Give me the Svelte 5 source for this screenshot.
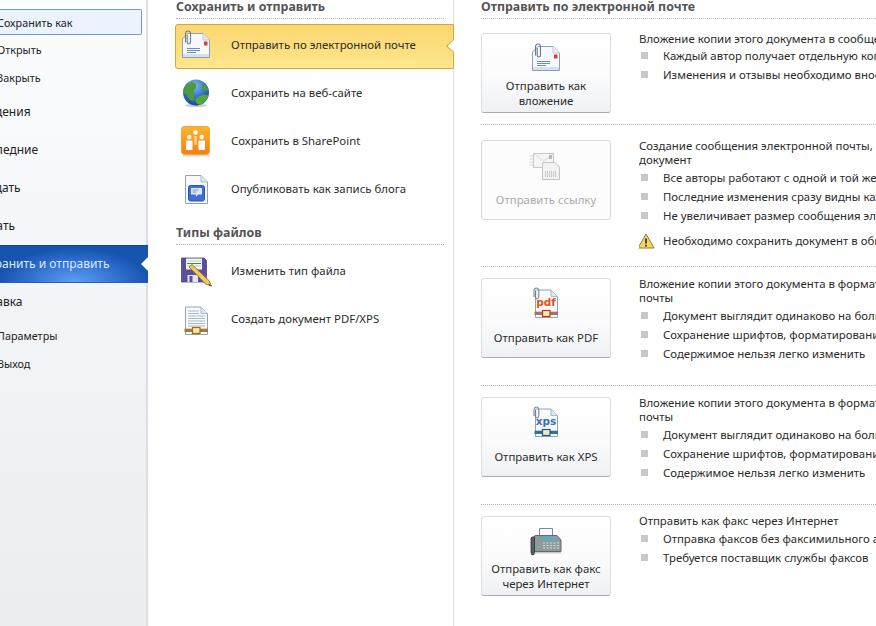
<script>
  const navItems = [
    { label: 'Сохранить как', small: true, hover: true },
    { label: 'Открыть', small: true },
    { label: 'Закрыть', small: true },
    { label: 'Сведения' },
    { label: 'Последние' },
    { label: 'Создать' },
    { label: 'Печать' },
    { label: 'Сохранить и отправить', active: true },
    { label: 'Справка' },
    { label: 'Параметры', small: true },
    { label: 'Выход', small: true },
  ];

  const sections = [
    {
      icon: 'mail', label: ['Отправить как', 'вложение'], cls: 'first',
      intro: ['Вложение копии этого документа в сообщение электронной почты'],
      points: ['Каждый автор получает отдельную копию документа', 'Изменения и отзывы необходимо вносить вручную'],
    },
    {
      icon: 'link', label: ['Отправить ссылку'], cls: 'second', disabled: true,
      intro: ['Создание сообщения электронной почты, содержащего ссылку на этот', 'документ'],
      points: ['Все авторы работают с одной и той же копией документа', 'Последние изменения сразу видны каждому автору', 'Не увеличивает размер сообщения электронной почты'],
      warning: 'Необходимо сохранить документ в общем расположении',
    },
    {
      icon: 'pdf', label: ['Отправить как PDF'], cls: 'third',
      intro: ['Вложение копии этого документа в формате PDF в сообщение электронной', 'почты'],
      points: ['Документ выглядит одинаково на большинстве компьютеров', 'Сохранение шрифтов, форматирования и изображений', 'Содержимое нельзя легко изменить'],
    },
    {
      icon: 'xps', label: ['Отправить как XPS'], cls: 'third',
      intro: ['Вложение копии этого документа в формате XPS в сообщение электронной', 'почты'],
      points: ['Документ выглядит одинаково на большинстве компьютеров', 'Сохранение шрифтов, форматирования и изображений', 'Содержимое нельзя легко изменить'],
    },
    {
      icon: 'fax', label: ['Отправить как факс', 'через Интернет'], cls: 'last',
      intro: ['Отправить как факс через Интернет'],
      points: ['Отправка факсов без факсимильного аппарата', 'Требуется поставщик службы факсов'],
    },
  ];
</script>

{#snippet mailIcon()}
  <svg width="30" height="30" viewBox="0 0 30 30">
    <path d="M1.5 9 L7 3.5 H22 L28.5 10 V27.5 H1.5 Z" fill="#f6f9fc" stroke="#8ba0b8" />
    <path d="M2 27 H28 V24 H2 Z" fill="#d5e0ec" />
    <path d="M22 3.5 V10 H28.5" fill="#e6ecf3" stroke="#c0ccd9" />
    <rect x="23" y="11.5" width="3.5" height="4" fill="#d8412f" />
    <path d="M6 18.5 H19 M6 20.5 H19 M6 22.5 H15" stroke="#6f8fb8" stroke-width="1" />
    <path d="M4.5 12.5 V4.5 Q4.5 1 7 1 Q9.5 1 9.5 4.5 V12 Q9.5 14 7.8 14 Q6.2 14 6.2 12 V5" fill="none" stroke="#6d7a88" stroke-width="1.1" />
  </svg>
{/snippet}

{#snippet globeIcon()}
  <svg width="30" height="30" viewBox="0 0 30 30">
    <defs>
      <radialGradient id="sea" cx="0.45" cy="0.25" r="0.85">
        <stop offset="0" stop-color="#86b9ec" />
        <stop offset="0.55" stop-color="#2d6fc2" />
        <stop offset="1" stop-color="#163a75" />
      </radialGradient>
    </defs>
    <ellipse cx="15" cy="27.5" rx="11" ry="1.6" fill="#c9ccd0" />
    <circle cx="15" cy="14.5" r="13" fill="url(#sea)" />
    <path d="M3 10 Q8 3 14 5 Q17 9 13 12 Q11 17 14 22 Q10 24 7 19 Q5 15 2.2 15 Z" fill="#4f9a3a" />
    <path d="M14 22 Q20 15 27.6 17.5 Q25 24 19 27 Q15 26 14 22 Z" fill="#58a53e" />
    <path d="M21 6 Q25 7 27.5 12 Q24 14 21 11 Z" fill="#4f9a3a" />
  </svg>
{/snippet}

{#snippet sharepointIcon()}
  <svg width="32" height="32" viewBox="0 0 32 32">
    <defs>
      <linearGradient id="spBox" x1="0" y1="0" x2="0" y2="1">
        <stop offset="0" stop-color="#fdb52f" />
        <stop offset="1" stop-color="#f57f0e" />
      </linearGradient>
    </defs>
    <rect x="3" y="30" width="27" height="1.5" fill="#d8dade" />
    <rect x="1.5" y="1.5" width="28" height="28" rx="3" fill="url(#spBox)" stroke="#f3a33a" />
    <g fill="#fff">
      <circle cx="15.5" cy="7.5" r="2.2" />
      <circle cx="9.3" cy="12" r="2.2" />
      <circle cx="21.7" cy="12" r="2.2" />
      <rect x="14.4" y="11" width="2.2" height="9" fill="#ffd79a" />
      <rect x="6" y="15.5" width="6.5" height="9.5" rx="0.8" />
      <rect x="18.5" y="15.5" width="6.5" height="9.5" rx="0.8" />
    </g>
  </svg>
{/snippet}

{#snippet blogIcon()}
  <svg width="30" height="30" viewBox="0 0 30 30">
    <path d="M4.5 1.5 H20 L26.5 8 V29.5 H4.5 Z" fill="#f7f9fc" stroke="#8ea4bd" />
    <path d="M20 1.5 V8 H26.5" fill="#dfe7f0" stroke="#a9bacd" />
    <rect x="7.5" y="11.5" width="16" height="15.5" rx="2" fill="#3f6fd6" stroke="#2f55ad" />
    <path d="M10 14 H21 V20.5 H17 L15 23 V20.5 H10 Z" fill="#dfe9fb" />
    <path d="M11.5 16 H17.5 M11.5 18 H15.5" stroke="#7897d8" stroke-width="1" />
  </svg>
{/snippet}

{#snippet floppyIcon()}
  <svg width="32" height="32" viewBox="0 0 32 32">
    <path d="M1.5 3 H24 L26.5 5.5 V27 H1.5 Z" fill="#5c4f9a" stroke="#4c4487" stroke-width="0.8" />
    <rect x="6" y="3.5" width="16" height="11" fill="#f4f6f2" />
    <path d="M7 8.5 H21" stroke="#2ca02c" stroke-width="1" />
    <path d="M7 6 H21 M7 11 H21" stroke="#c6ccd4" stroke-width="1" />
    <rect x="7.5" y="20" width="10.5" height="7" fill="#e4e5ee" />
    <rect x="9.5" y="21" width="3" height="6" fill="#5c4f9a" />
    <path d="M9 12 L12 9.5 L29 25.5 L31.5 31 L25.5 29 Z" fill="#f2c65e" stroke="#7a6030" stroke-width="0.8" />
    <path d="M28.5 28.5 L31.5 31 L29.2 30.4 Z" fill="#333" />
  </svg>
{/snippet}

{#snippet pageIcon(text, ink, band, clasp, clip)}
  <svg width="32" height="32" viewBox="0 0 32 32">
    <path d="M5.5 4 H21 L27.5 10.5 V31.5 H5.5 Z" fill="#f8fafc" stroke="#8ea4bd" />
    <path d="M21 4 V10.5 H27.5" fill="#dfe7f0" stroke="#a9bacd" />
    {#if text}
      <text x="16" y="19.7" text-anchor="middle" class="doc-text" fill={ink}>{text}</text>
    {:else}
      <path d="M8 8 H19 M8 10.5 H19 M8 13 H25 M8 15.5 H25 M8 18 H25 M8 20.5 H25 M8 23 H25" stroke="#a5b7cc" stroke-width="1" />
    {/if}
    <rect x="4.5" y="25.7" width="23.5" height="3.3" fill={band} />
    <rect x="12.5" y="24.5" width="7.5" height="6" fill="#fbe7b0" stroke={clasp} stroke-width="1.2" />
    {#if clip}
      <path d="M4 11 V4.5 Q4 2 6.3 2 Q8.8 2 8.8 4.5 V11 Q8.8 13 7 13 Q5.6 13 5.6 11 V5.5" fill="none" stroke="#6d7a88" stroke-width="1" />
    {/if}
  </svg>
{/snippet}

{#snippet linkIcon()}
  <svg width="34" height="32" viewBox="0 0 34 32">
    <path d="M0.5 8 H4.5 M0.5 11 H4.5 M0.5 14 H4.5 M0.5 17 H4.5" stroke="#d4d4d4" />
    <rect x="4.5" y="5.5" width="20" height="14" fill="#f5f5f5" stroke="#c8c8c8" />
    <path d="M5 6 L14.5 13 L24 6" fill="none" stroke="#dcdcdc" />
    <rect x="20" y="7" width="3" height="4" fill="#b8b8b8" />
    <path d="M13.5 14.5 H26 L30.5 19 V31.5 H13.5 Z" fill="#f2f2f2" stroke="#c4c4c4" />
    <path d="M16 24 H28 M16 26 H28 M16 28 H28" stroke="#a0a0a0" stroke-dasharray="1 1" />
  </svg>
{/snippet}

{#snippet faxIcon()}
  <svg width="34" height="30" viewBox="0 0 34 30">
    <path d="M10.5 2.5 H23.5 V11 H10.5 Z" fill="#f6f8fb" stroke="#7c8894" />
    <path d="M5 11 Q5 9.5 7 9.5 H28 L32 14 V25.5 H5 Z" fill="#8d9b9e" stroke="#5e6a6e" />
    <rect x="13" y="11" width="13" height="3" fill="#4fb0c8" />
    <path d="M14 17 H30 M14 19.5 H30 M14 22 H30" stroke="#d3dadc" stroke-dasharray="2 1.5" />
    <rect x="8" y="20" width="2" height="2" fill="#55d455" />
    <path d="M3 11 H5.5 V26 Q5.5 29 3.8 29 Q2 29 2 26 V12 Z" fill="#5a6063" stroke="#2f3336" stroke-width="0.8" />
    <rect x="6" y="26" width="26" height="1.5" fill="#c8cbce" />
  </svg>
{/snippet}

{#snippet bigIcon(name)}
  {#if name === 'mail'}
    {@render mailIcon()}
  {:else if name === 'link'}
    {@render linkIcon()}
  {:else if name === 'pdf'}
    {@render pageIcon('pdf', '#e2521d', '#b0705f', '#b83a20', true)}
  {:else if name === 'xps'}
    {@render pageIcon('xps', '#3c6fc2', '#2f6fa8', '#1f5a90', true)}
  {:else}
    {@render faxIcon()}
  {/if}
{/snippet}

<div class="page">
  <nav class="nav">
    {#each navItems as item}
      <div class="nav-item" class:small={item.small} class:hover={item.hover} class:active={item.active}>
        <span class="nav-label">{item.label}</span>
      </div>
    {/each}
  </nav>

  <div class="middle">
    <h2 class="heading">Сохранить и отправить</h2>
    <div class="option selected">
      <span class="option-icon">{@render mailIcon()}</span>
      <span>Отправить по электронной почте</span>
    </div>
    <div class="option">
      <span class="option-icon">{@render globeIcon()}</span>
      <span class="option-text">Сохранить на веб-сайте</span>
    </div>
    <div class="option">
      <span class="option-icon">{@render sharepointIcon()}</span>
      <span class="option-text">Сохранить в SharePoint</span>
    </div>
    <div class="option">
      <span class="option-icon">{@render blogIcon()}</span>
      <span class="option-text">Опубликовать как запись блога</span>
    </div>
    <h2 class="heading second">Типы файлов</h2>
    <div class="option">
      <span class="option-icon">{@render floppyIcon()}</span>
      <span class="option-text">Изменить тип файла</span>
    </div>
    <div class="option">
      <span class="option-icon">{@render pageIcon('', '', '#a9792e', '#9a6c1c', false)}</span>
      <span class="option-text">Создать документ PDF/XPS</span>
    </div>
  </div>

  <div class="detail">
    <h2 class="heading">Отправить по электронной почте</h2>
    {#each sections as s}
      <section class="row {s.cls}">
        <div class="big-btn" class:disabled={s.disabled}>
          <div class="big-icon">{@render bigIcon(s.icon)}</div>
          <div class="big-label">
            {#each s.label as line}<span>{line}</span>{/each}
          </div>
        </div>
        <div class="desc">
          {#each s.intro as line}<p>{line}</p>{/each}
          <ul>
            {#each s.points as p}<li>{p}</li>{/each}
          </ul>
          {#if s.warning}
            <div class="warn">
              <svg width="18" height="16" viewBox="0 0 18 16">
                <path d="M9 1 L17 15 H1 Z" fill="#f6d55c" stroke="#8c7a3c" stroke-linejoin="round" />
                <path d="M9 5.5 V10.5 M9 11.8 V13.4" stroke="#222" stroke-width="1.6" />
              </svg>
              <span>{s.warning}</span>
            </div>
          {/if}
        </div>
      </section>
    {/each}
  </div>
</div>

<style>
  :global(body) {
    margin: 0;
    overflow: hidden;
    background: #fff;
  }
  .page {
    display: flex;
    width: 876px;
    height: 626px;
    overflow: hidden;
    font-family: "Noto Sans", sans-serif;
    font-size: 11.4px;
    color: #2b2b2b;
  }
  .nav {
    flex: 0 0 148px;
    box-sizing: border-box;
    padding-top: 8px;
    overflow: hidden;
    background: linear-gradient(180deg, #fcfdff 0%, #f2f4f7 50%, #ebedf1 100%);
    box-shadow: inset -2px 0 0 #dcdee2;
  }
  .nav-item {
    position: relative;
    display: flex;
    align-items: center;
    box-sizing: border-box;
    height: 38px;
    padding-bottom: 2px;
    font-size: 12px;
    color: #222;
    white-space: nowrap;
  }
  .nav-label {
    margin-left: -26px;
  }
  .nav-item.small {
    height: 28px;
    font-size: 10.8px;
  }
  .nav-item.small .nav-label {
    margin-left: -3px;
  }
  .nav-item.small + .nav-item:not(.small),
  .nav-item:not(.small) + .nav-item.small {
    margin-top: 1px;
  }
  .nav-item.hover {
    margin: 1px 6px 1px 0;
    height: 26px;
    padding-bottom: 0;
    background: #eaf3fe;
    border: 1px solid #6d99dc;
    border-left: 0;
    border-radius: 0 2px 2px 0;
  }
  .nav-item.active {
    color: #dfeaff;
    background: radial-gradient(ellipse 75px 34px at 50% 100%, #5f9ff0 0%, #2f71d0 60%, #1754ae 100%);
    border-top: 1px solid #0b46a3;
    border-bottom: 1px solid #2c5fb0;
  }
  .nav-item.active::after {
    content: "";
    position: absolute;
    right: 0;
    top: 11px;
    border: 7px solid transparent;
    border-left: 0;
    border-right-color: #fff;
  }
  .middle {
    flex: 0 0 306px;
    box-sizing: border-box;
    padding-left: 28px;
    border-right: 1px solid #e3e3e3;
  }
  .heading {
    margin: 0;
    height: 19px;
    box-sizing: border-box;
    line-height: 14px;
    font-size: 12.4px;
    font-weight: 700;
    color: #555;
    border-bottom: 1px dotted #b4b4b4;
    white-space: nowrap;
  }
  .middle .heading {
    margin-right: 9px;
  }
  .heading.second {
    margin-top: 9px;
    margin-bottom: 2px;
    height: 23px;
    line-height: 22px;
  }
  .option {
    display: flex;
    align-items: center;
    height: 48px;
    white-space: nowrap;
  }
  .option-text {
    margin-bottom: 2px;
  }
  .option-icon {
    display: flex;
    justify-content: center;
    flex: 0 0 36px;
    margin: 0 17px 0 2px;
  }
  .option.selected {
    position: relative;
    box-sizing: border-box;
    height: 45px;
    margin: 5px -1px 0 -1px;
    padding-bottom: 4px;
    background: linear-gradient(180deg, #fcd771 0%, #fcdf80 60%, #fee88f 100%);
    border: 1px solid #d5a53e;
    border-radius: 3px 0 0 3px;
  }
  .option.selected::before {
    content: "";
    position: absolute;
    right: -1px;
    top: 14px;
    width: 8px;
    height: 14px;
    background: #d5a53e;
    clip-path: polygon(100% 0, 0 50%, 100% 100%);
  }
  .option.selected::after {
    content: "";
    position: absolute;
    right: -1px;
    top: 15px;
    width: 6.5px;
    height: 12px;
    background: #fff;
    clip-path: polygon(100% 0, 0 50%, 100% 100%);
  }
  .detail {
    flex: 1;
    min-width: 0;
    padding-left: 27px;
  }
  .row {
    display: grid;
    grid-template-columns: 130px 1fr;
    column-gap: 28px;
    box-sizing: border-box;
    border-bottom: 1px dotted #b4b4b4;
    white-space: nowrap;
  }
  .row.first { height: 106px; padding-top: 14px; }
  .row.second { height: 142px; padding-top: 15px; }
  .row.third { height: 119px; padding-top: 11px; }
  .row.last { border-bottom: 0; padding-top: 11px; }
  .big-btn {
    display: flex;
    flex-direction: column;
    box-sizing: border-box;
    height: 80px;
    background: linear-gradient(180deg, #fff 0%, #fbfbfc 55%, #eff1f4 100%);
    border: 1px solid #dcdee1;
    border-bottom-color: #a8aaad;
    border-radius: 3px;
  }
  .big-icon {
    display: flex;
    align-items: flex-end;
    justify-content: center;
    height: 39px;
  }
  .big-label {
    display: flex;
    flex-direction: column;
    align-items: center;
    justify-content: center;
    box-sizing: border-box;
    height: 40px;
    line-height: 15px;
  }
  .first .big-label,
  .last .big-label {
    padding-top: 2px;
  }
  .big-btn.disabled {
    background: #fcfcfc;
    border-color: #d8d8d8;
  }
  .big-btn.disabled .big-label {
    color: #aaa;
  }
  .desc {
    margin-top: -1px;
    overflow: hidden;
  }
  p {
    margin: 0;
    line-height: 14px;
  }
  .last p {
    margin: -1px 0 1px;
  }
  ul {
    list-style: none;
    margin: 0;
    padding: 0;
  }
  .second ul,
  .third ul {
    margin-top: 1px;
  }
  li {
    position: relative;
    height: 19px;
    line-height: 19px;
    padding-left: 24px;
  }
  li::before {
    content: "";
    position: absolute;
    left: 2px;
    top: 6px;
    width: 7px;
    height: 7px;
    background: #c8c8c8;
  }
  .warn {
    display: flex;
    align-items: center;
    gap: 8px;
    margin-top: 6px;
    margin-left: -2px;
    height: 19px;
  }
  .warn svg {
    flex: none;
  }
  .doc-text {
    font-family: "DejaVu Sans", sans-serif;
    font-size: 10.5px;
    font-weight: 700;
  }
</style>
